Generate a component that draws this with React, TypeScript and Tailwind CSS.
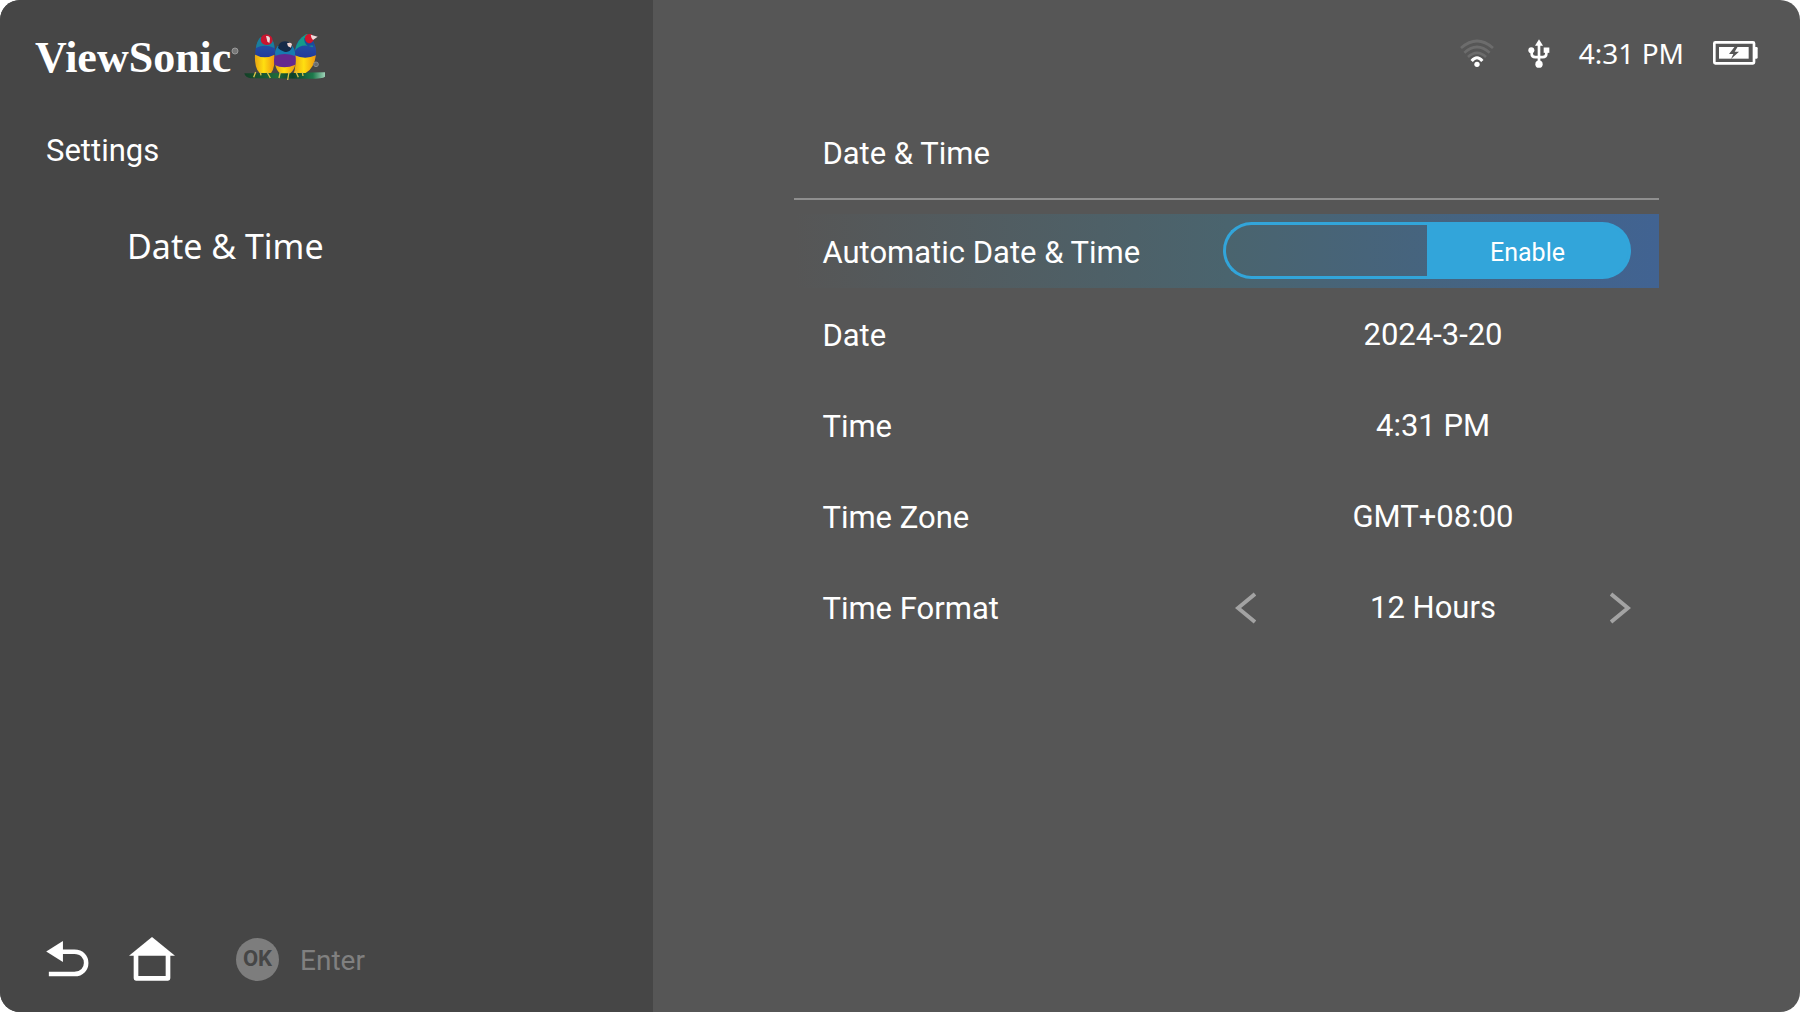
import { useState } from 'react';
import type { ReactNode } from 'react';

const FORMATS = ['12 Hours', '24 Hours'];

function Birds() {
  return (
    <svg viewBox="38 30 252 150" className="w-[84px] h-[50px]" aria-hidden="true">
      <defs>
        <linearGradient id="branch" x1="0" x2="1">
          <stop offset="0" stopColor="#123f26" />
          <stop offset="0.4" stopColor="#1f6a3a" />
          <stop offset="0.6" stopColor="#0d4028" />
          <stop offset="0.85" stopColor="#1d7a4c" />
          <stop offset="1" stopColor="#9fd3b8" />
        </linearGradient>
        <linearGradient id="belly" x1="0" x2="1">
          <stop offset="0" stopColor="#e9a512" />
          <stop offset="0.45" stopColor="#ffdf10" />
          <stop offset="1" stopColor="#f0960f" />
        </linearGradient>
        <linearGradient id="wing" x1="0" y1="0" x2="0" y2="1">
          <stop offset="0" stopColor="#2258a8" />
          <stop offset="1" stopColor="#223a9a" />
        </linearGradient>
      </defs>
      <path d="M42 154 L160 153 L284 151 L284 164 Q276 170 240 170 L60 169 Q44 166 42 154 Z" fill="url(#branch)" />
      {/* left */}
      <path d="M74 98 Q72 138 88 153 L122 153 Q136 134 132 98 Z" fill="url(#belly)" />
      <path d="M86 54 Q74 70 75 98 Q102 114 133 98 Q138 74 126 56 Z" fill="url(#wing)" />
      <path d="M90 46 Q79 58 77 78 Q102 64 132 78 Q131 56 120 46 Z" fill="#1a7e9c" />
      <path d="M91 54 Q92 38 109 37 Q126 39 127 56 Q123 69 108 69 Q93 67 91 54 Z" fill="#c8152f" />
      <path d="M107 42 Q118 40 119 50 L117 64 L111 58 Z" fill="#ecdada" />
      {/* right */}
      <path d="M193 98 Q198 136 190 153 L226 153 Q252 138 257 98 Z" fill="url(#belly)" />
      <path d="M214 46 Q190 68 193 100 Q224 114 257 100 Q260 76 248 58 Z" fill="url(#wing)" />
      <path d="M228 36 Q200 52 194 86 Q214 62 248 76 L240 40 Z" fill="#159a8a" />
      <path d="M222 48 Q220 62 232 72 L252 70 L246 46 Z" fill="#194c9c" />
      <path d="M224 45 Q229 33 244 37 L251 50 Q247 64 234 64 Q223 59 224 45 Z" fill="#d1152c" />
      <path d="M241 38 L262 44 L248 54 Q242 48 241 38 Z" fill="#f0dcdc" />
      {/* middle */}
      <path d="M134 126 Q138 146 150 154 L180 154 Q192 144 195 126 Z" fill="url(#belly)" />
      <path d="M138 92 Q127 112 133 129 Q162 143 195 128 Q199 104 192 92 Z" fill="#65298e" />
      <path d="M142 72 Q131 88 135 101 Q164 90 194 102 Q197 84 184 70 Z" fill="#177bb0" />
      <path d="M143 78 Q145 59 164 58 Q184 59 185 76 Q179 93 162 89 Q149 85 143 78 Z" fill="#152a48" />
      <path d="M170 64 Q180 60 185 66 L182 77 L173 73 Z" fill="#f3d6d2" />
      <path
        d="M76 150 L70 166 M110 150 L120 168 M90 150 L92 160 M150 150 L146 168 M176 150 L172 174 M196 148 L204 166 M216 150 L218 162"
        stroke="#d9c24a"
        strokeWidth="4"
        fill="none"
      />
      <circle cx="257" cy="127" r="7" fill="#6c6c6c" stroke="#8b8b8b" strokeWidth="3" />
    </svg>
  );
}

function Logo() {
  return (
    <div className="flex items-center">
      <span className="font-['Liberation_Serif',serif] font-bold text-[44px] leading-[50px] pt-0.5">ViewSonic</span>
      <svg viewBox="0 0 8 8" className="size-2 mb-3 mr-1" aria-hidden="true">
        <circle cx="4" cy="4" r="3" fill="#777777" stroke="#999999" />
      </svg>
      <Birds />
    </div>
  );
}

function WifiIcon() {
  return (
    <svg viewBox="0 0 102 84" className="w-[34px] h-7" fill="none" role="img" aria-label="Wi-Fi">
      <g stroke="#6c6c6c" strokeWidth="8">
        <path d="M3 27 Q51 -15 99 27" />
        <path d="M13 41 Q51 7 89 41" />
        <path d="M24 54 Q51 29 78 54" />
      </g>
      <path d="M35 66 Q51 47 67 66" stroke="#ffffff" strokeWidth="9" />
      <circle cx="51" cy="76" r="8" fill="#ffffff" />
    </svg>
  );
}

function UsbIcon() {
  return (
    <svg viewBox="0 0 66 86" className="w-[22px] h-[29px]" fill="none" role="img" aria-label="USB">
      <path d="M33 12 V74 M11 34 V44 Q11 54 22 54 H44 Q55 54 55 44 V34" stroke="#ffffff" strokeWidth="8" />
      <path d="M33 0 L45 20 H21 Z" fill="#ffffff" />
      <circle cx="10" cy="33" r="9" fill="#ffffff" />
      <rect x="47" y="25" width="17" height="16" fill="#ffffff" />
      <circle cx="33" cy="75" r="11" fill="#ffffff" />
    </svg>
  );
}

function BatteryIcon() {
  return (
    <svg viewBox="0 0 135 72" className="w-[45px] h-6" fill="none" role="img" aria-label="Battery charging">
      <rect x="4" y="4" width="119" height="63" rx="3" stroke="#ffffff" strokeWidth="8" />
      <path d="M125 18 H131 Q134 18 134 22 V49 Q134 53 131 53 H125 Z" fill="#ffffff" />
      <rect x="18" y="18" width="89" height="35" fill="#ffffff" />
      <path d="M65 17 L48 39 H61 L54 54 L78 32 H65 L74 17 Z" fill="#565656" />
    </svg>
  );
}

function BackIcon() {
  return (
    <svg viewBox="0 0 130 110" className="w-[43px] h-9" fill="none" aria-hidden="true">
      <path d="M0 32 L51 0 V64 Z" fill="#ffffff" />
      <path d="M48 33 H86 C134 33 134 101 86 101 H8" stroke="#ffffff" strokeWidth="14" />
    </svg>
  );
}

function HomeIcon() {
  return (
    <svg viewBox="0 0 138 132" className="w-[46px] h-11" fill="none" aria-hidden="true">
      <path d="M69 0 L138 56 H0 Z" fill="#ffffff" />
      <path d="M21 50 V124 H117 V50" stroke="#ffffff" strokeWidth="14" strokeLinejoin="round" />
    </svg>
  );
}

function Arrow({ flip = false }: { flip?: boolean }) {
  return (
    <svg viewBox="0 0 21 32" className="w-[21px] h-8" fill="none" stroke="#a3a3a3" strokeWidth="4" aria-hidden="true">
      <path d={flip ? 'M1 2 L18 16 L1 30' : 'M20 2 L3 16 L20 30'} />
    </svg>
  );
}

function Row({ label, children }: { label: string; children: ReactNode }) {
  return (
    <li className="flex items-center justify-between h-[91px] px-7">
      <span className="pt-1">{label}</span>
      <div className="w-[396px] pt-0.5 text-center">{children}</div>
    </li>
  );
}

export default function App() {
  const [auto, setAuto] = useState(true);
  const [format, setFormat] = useState(0);
  const nextFormat = () => setFormat((format + 1) % FORMATS.length);

  return (
    <div className="bg-white">
      <div className="flex min-h-screen rounded-[20px] overflow-hidden bg-[#565656] text-white font-[Roboto,sans-serif] text-[31px] leading-10">
        <aside className="flex flex-col justify-between w-[36.3%] bg-[#464646]">
          <div>
            <div className="pl-[35px] pt-[31px]">
              <Logo />
            </div>
            <h1 className="pl-[46px] pt-[48px]">Settings</h1>
            <nav className="pl-[127px] pt-[50px]">
              <a href="#date-time" className="font-['Noto_Sans',sans-serif] text-[34px] leading-[50px]">
                Date &amp; Time
              </a>
            </nav>
          </div>
          <footer className="flex items-center pl-[46px] pb-[31px]">
            <button type="button" aria-label="Back">
              <BackIcon />
            </button>
            <button type="button" aria-label="Home" className="ml-10">
              <HomeIcon />
            </button>
            <button type="button" className="flex items-center gap-[21px] ml-[61px] text-[#808080] text-[28px]">
              <span className="flex items-center justify-center size-[43px] rounded-full bg-[#7d7d7d] text-[#464646] text-[22px] font-bold">
                OK
              </span>
              <span className="pt-1">Enter</span>
            </button>
          </footer>
        </aside>

        <main className="flex-1">
          <header className="flex items-center justify-end pt-7 pr-[42px] h-[78px]">
            <WifiIcon />
            <span className="ml-[34px]">
              <UsbIcon />
            </span>
            <time className="ml-[29px] mr-[29px] font-['Noto_Sans',sans-serif] text-[28px]">4:31 PM</time>
            <BatteryIcon />
          </header>

          <section id="date-time" className="px-[141px] pt-14">
            <h2 className="px-7 mb-3.5 border-b-2 border-[#8f8f8f] h-[66px]">Date &amp; Time</h2>
            <ul>
              <li className="flex items-start justify-between h-[74px] px-7 pt-2 bg-linear-to-r from-[#565656] via-[#4a646e] to-[#416392]">
                <label htmlFor="auto-date" className="pt-[11px]">
                  Automatic Date &amp; Time
                </label>
                <label className="relative grid grid-cols-2 w-[408px] h-[57px] text-[25px] cursor-pointer">
                  <input
                    id="auto-date"
                    type="checkbox"
                    role="switch"
                    checked={auto}
                    onChange={(e) => setAuto(e.target.checked)}
                    className="sr-only"
                  />
                  <span
                    className={`flex items-center justify-center pt-1 rounded-l-full border-3 border-r-0 ${
                      auto ? 'border-[#32a5da]' : 'border-[#7d7d7d] bg-[#7d7d7d]'
                    }`}
                  >
                    {!auto && 'Disable'}
                  </span>
                  <span
                    className={`flex items-center justify-center pt-1 rounded-r-full border-3 border-l-0 ${
                      auto ? 'border-[#32a5da] bg-[#32a5da]' : 'border-[#7d7d7d]'
                    }`}
                  >
                    {auto && 'Enable'}
                  </span>
                </label>
              </li>
              <Row label="Date">
                <button type="button">2024-3-20</button>
              </Row>
              <Row label="Time">
                <button type="button">4:31 PM</button>
              </Row>
              <Row label="Time Zone">
                <button type="button">GMT+08:00</button>
              </Row>
              <Row label="Time Format">
                <div className="flex items-center justify-between">
                  <button type="button" aria-label="Previous format" onClick={nextFormat}>
                    <Arrow />
                  </button>
                  <span>{FORMATS[format]}</span>
                  <button type="button" aria-label="Next format" onClick={nextFormat}>
                    <Arrow flip />
                  </button>
                </div>
              </Row>
            </ul>
          </section>
        </main>
      </div>
    </div>
  );
}
